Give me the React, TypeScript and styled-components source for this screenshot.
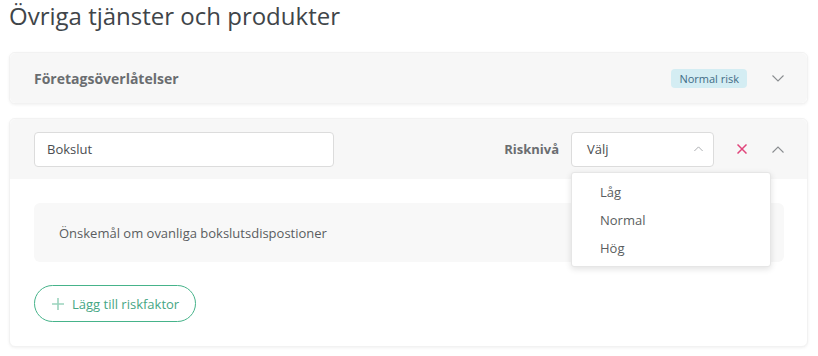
import styled, { createGlobalStyle } from 'styled-components';

const GlobalStyle = createGlobalStyle`
	body {
		margin: 0;
		background: #fff;
		font-family: 'Open Sans', 'Liberation Sans', sans-serif;
		color: #555;
	}
	* { box-sizing: border-box; }
`;

const Page = styled.div`
	padding: 0 10px 0 9px;
	width: 818px;
`;
const Title = styled.h1`
	margin: 0 0 20px;
	font-size: 24px;
	line-height: 32px;
	font-weight: 400;
	color: #3f4549;
`;
const Card = styled.section`
	background: #fff;
	border-radius: 6px;
	box-shadow: 0 1px 3px rgba(0, 0, 0, 0.06);
	border: 1px solid #f2f2f2;
	margin-bottom: 14px;
`;
const CardHeader = styled.div<{ $height: number; $open?: boolean }>`
	height: ${(p) => p.$height}px;
	background: #f7f7f7;
	border-radius: ${(p) => (p.$open ? '6px 6px 0 0' : '6px')};
	display: flex;
	align-items: center;
	padding: 0 17px 0 24px;
	gap: 12px;
`;
const CardTitle = styled.h3`
	margin: 0;
	flex: 1;
	font-size: 14px;
	font-weight: 700;
	color: #6a6d70;
`;
const Badge = styled.span`
	background: #d4edf3;
	color: #3e6c86;
	font-size: 11px;
	line-height: 19px;
	padding: 0 8px;
	border-radius: 4px;
	margin-right: 7px;
`;
const IconButton = styled.button<{ $color?: string }>`
	width: 24px;
	height: 24px;
	padding: 0;
	border: 0;
	background: none;
	display: inline-flex;
	align-items: center;
	justify-content: center;
	color: ${(p) => p.$color || '#8a8d90'};
	cursor: pointer;
`;
const NameInput = styled.input`
	width: 300px;
	height: 35px;
	border: 1px solid #dcdcdc;
	border-radius: 4px;
	padding: 0 12px;
	font-family: inherit;
	font-size: 13px;
	color: #4a4d50;
	background: #fff;
`;
const Spacer = styled.div`
	flex: 1;
`;
const FieldLabel = styled.span`
	font-size: 13px;
	font-weight: 700;
	color: #6a6d70;
`;
const SelectWrap = styled.div`
	position: relative;
	margin-right: 4px;
`;
const SelectBox = styled.div`
	width: 143px;
	height: 35px;
	border: 1px solid #dcdcdc;
	border-radius: 4px;
	background: #fff;
	display: flex;
	align-items: center;
	justify-content: space-between;
	padding: 0 10px 0 15px;
	font-size: 13px;
	color: #4a4d50;
`;
const SelectArrow = styled.span`
	color: #9a9da0;
	display: inline-flex;
`;
const Menu = styled.ul`
	position: absolute;
	top: 40px;
	left: 0;
	width: 200px;
	margin: 0;
	padding: 5px 0 4px;
	list-style: none;
	background: #fff;
	border-radius: 3px;
	border: 1px solid #e6e6e6;
	box-shadow: 0 2px 6px rgba(0, 0, 0, 0.12);
	z-index: 2;
	> li {
		height: 28px;
		line-height: 28px;
		padding-left: 28px;
		font-size: 13px;
		color: #5a5d60;
	}
`;
const CardBody = styled.div`
	padding: 24px 23px 24px 24px;
`;
const FactorBox = styled.div`
	background: #f8f8f8;
	border-radius: 6px;
	height: 59px;
	display: flex;
	align-items: center;
	padding: 0 25px;
	font-size: 13px;
	color: #5a5d60;
	margin-bottom: 23px;
`;
const AddButton = styled.button`
	height: 37px;
	padding: 0 16px 0 17px;
	border: 1px solid #46b38a;
	border-radius: 19px;
	background: #fff;
	color: #45a683;
	font-family: inherit;
	font-size: 13px;
	display: inline-flex;
	align-items: center;
	gap: 8px;
	cursor: pointer;
`;

const Chevron = ({ up, size = 12 }: { up?: boolean; size?: number }) => (
	<svg width={size} height={size / 2 + 1} viewBox="0 0 12 7" fill="none">
		<path d={up ? 'M0.5 6.5 6 1 11.5 6.5' : 'M0.5 0.5 6 6 11.5 0.5'} stroke="currentColor" strokeWidth="1.1" />
	</svg>
);
const CloseX = () => (
	<svg width="10" height="10" viewBox="0 0 10 10" fill="none">
		<path d="M0.5 0.5 9.5 9.5M9.5 0.5 0.5 9.5" stroke="currentColor" strokeWidth="1.5" />
	</svg>
);
const Plus = () => (
	<svg width="12" height="12" viewBox="0 0 12 12" fill="none">
		<path d="M6 0v12M0 6h12" stroke="#9bd3bd" strokeWidth="1.6" />
	</svg>
);

export default function App() {
	return (
		<Page>
			<GlobalStyle />
			<Title>Övriga tjänster och produkter</Title>
			<Card>
				<CardHeader $height={50}>
					<CardTitle>Företagsöverlåtelser</CardTitle>
					<Badge>Normal risk</Badge>
					<IconButton aria-label="expand">
						<Chevron />
					</IconButton>
				</CardHeader>
			</Card>
			<Card>
				<CardHeader $height={60} $open>
					<NameInput defaultValue="Bokslut" />
					<Spacer />
					<FieldLabel>Risknivå</FieldLabel>
					<SelectWrap>
						<SelectBox>
							<span>Välj</span>
							<SelectArrow>
								<Chevron up size={9} />
							</SelectArrow>
						</SelectBox>
						<Menu>
							<li>Låg</li>
							<li>Normal</li>
							<li>Hög</li>
						</Menu>
					</SelectWrap>
					<IconButton $color="#e0457b" aria-label="remove">
						<CloseX />
					</IconButton>
					<IconButton aria-label="collapse">
						<Chevron up />
					</IconButton>
				</CardHeader>
				<CardBody>
					<FactorBox>Önskemål om ovanliga bokslutsdispostioner</FactorBox>
					<AddButton>
						<Plus />
						Lägg till riskfaktor
					</AddButton>
				</CardBody>
			</Card>
		</Page>
	);
}
